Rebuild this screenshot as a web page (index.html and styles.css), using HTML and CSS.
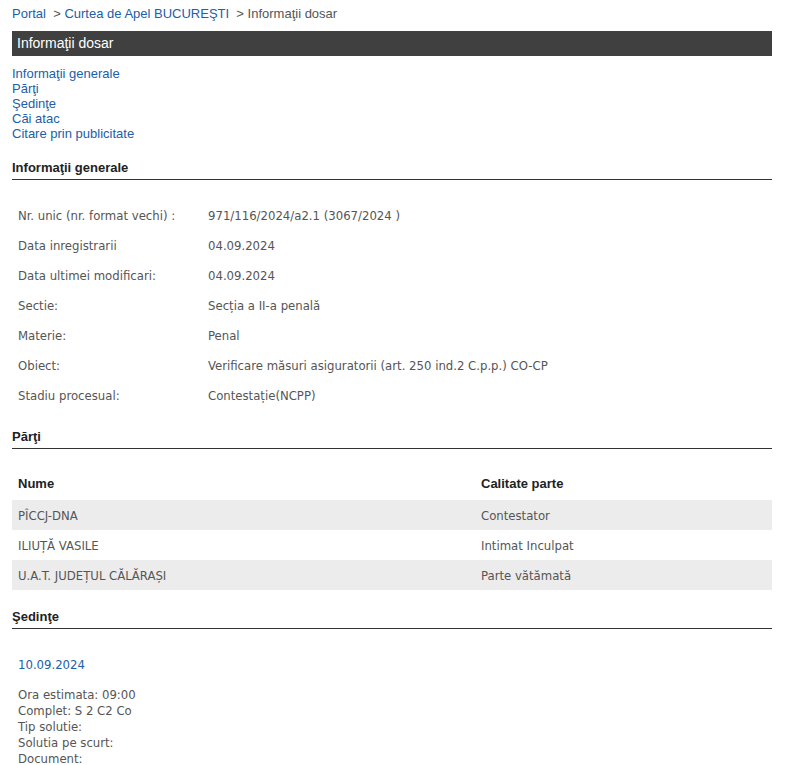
FILE: index.html
```html
<!DOCTYPE html>
<html lang="ro">
<head>
  <meta charset="UTF-8" />
  <title>Informaţii dosar</title>
  <link rel="stylesheet" href="styles.css">
</head>
<body>
  <div class="pagina">
    <div class="breadcrumb">
      <a href="#">Portal</a> &nbsp;&gt; <a href="#">Curtea de Apel BUCUREŞTI</a> &nbsp;&gt; Informaţii dosar
    </div>

    <div class="titlu-bara">Informaţii dosar</div>

    <ul class="cuprins">
      <li><a href="#generale">Informaţii generale</a></li>
      <li><a href="#parti">Părţi</a></li>
      <li><a href="#sedinte">Şedinţe</a></li>
      <li><a href="#cai">Căi atac</a></li>
      <li><a href="#citare">Citare prin publicitate</a></li>
    </ul>

    <h3 class="sectiune" id="generale">Informaţii generale</h3>
    <table class="info">
      <tr><td class="eticheta">Nr. unic (nr. format vechi) :</td><td>971/116/2024/a2.1 (3067/2024 )</td></tr>
      <tr><td class="eticheta">Data inregistrarii</td><td>04.09.2024</td></tr>
      <tr><td class="eticheta">Data ultimei modificari:</td><td>04.09.2024</td></tr>
      <tr><td class="eticheta">Sectie:</td><td>Secția a II-a penală</td></tr>
      <tr><td class="eticheta">Materie:</td><td>Penal</td></tr>
      <tr><td class="eticheta">Obiect:</td><td>Verificare măsuri asiguratorii (art. 250 ind.2 C.p.p.) CO-CP</td></tr>
      <tr><td class="eticheta">Stadiu procesual:</td><td>Contestație(NCPP)</td></tr>
    </table>

    <h3 class="sectiune" id="parti">Părţi</h3>
    <table class="parti">
      <tr><th class="col-nume">Nume</th><th>Calitate parte</th></tr>
      <tr class="gri"><td>PÎCCJ-DNA</td><td>Contestator</td></tr>
      <tr><td>ILIUȚĂ VASILE</td><td>Intimat Inculpat</td></tr>
      <tr class="gri"><td>U.A.T. JUDEȚUL CĂLĂRAȘI</td><td>Parte vătămată</td></tr>
    </table>

    <h3 class="sectiune" id="sedinte">Şedinţe</h3>
    <div class="sedinta">
      <div class="data-sedinta">10.09.2024</div>
      <div class="detalii">
        Ora estimata: 09:00<br>
        Complet: S 2 C2 Co<br>
        Tip solutie:<br>
        Solutia pe scurt:<br>
        Document:
      </div>
    </div>
  </div>
</body>
</html>
```

FILE: styles.css
```css
body {
  margin: 0;
  background: #fff;
  color: #555;
  font-family: "Liberation Sans", Arial, sans-serif;
  font-size: 13px;
}
a {
  color: #2060a8;
  text-decoration: none;
}
.pagina {
  width: 760px;
  margin-left: 12px;
  padding-top: 6px;
}
.breadcrumb {
  line-height: 15px;
  color: #555;
}
.titlu-bara {
  margin-top: 10px;
  height: 25px;
  line-height: 25px;
  background: #404040;
  color: #fff;
  font-size: 14px;
  padding-left: 5px;
}
.cuprins {
  list-style: none;
  margin: 10px 0 0 0;
  padding: 0;
}
.cuprins li {
  line-height: 15px;
}
.sectiune {
  margin: 18px 0 0 0;
  font-size: 13px;
  font-weight: bold;
  color: #222;
  line-height: 17px;
  padding-bottom: 3px;
  border-bottom: 1px solid #333;
}
.info,
.parti {
  border-collapse: collapse;
  width: 100%;
  font-family: "DejaVu Sans Condensed", "DejaVu Sans", sans-serif;
  font-size: 13px;
}
.info {
  margin-top: 20px;
}
.info td {
  height: 30px;
  padding: 0 6px;
  vertical-align: middle;
}
.info .eticheta {
  width: 178px;
}
.parti {
  margin-top: 21px;
}
.parti td {
  height: 30px;
  padding: 0 6px;
  text-align: left;
}
.parti th {
  height: 26px;
  padding: 0 6px 4px 6px;
  text-align: left;
  color: #222;
  font-weight: bold;
  font-family: "Liberation Sans", Arial, sans-serif;
  font-size: 13px;
}
.parti .col-nume {
  width: 451px;
}
.parti .gri {
  background: #ececec;
}
.sedinta {
  padding: 28px 6px 0 6px;
  font-family: "DejaVu Sans Condensed", "DejaVu Sans", sans-serif;
  font-size: 13px;
}
.data-sedinta {
  color: #2060a8;
  line-height: 16px;
}
.detalii {
  margin-top: 14px;
  line-height: 16px;
}
```
